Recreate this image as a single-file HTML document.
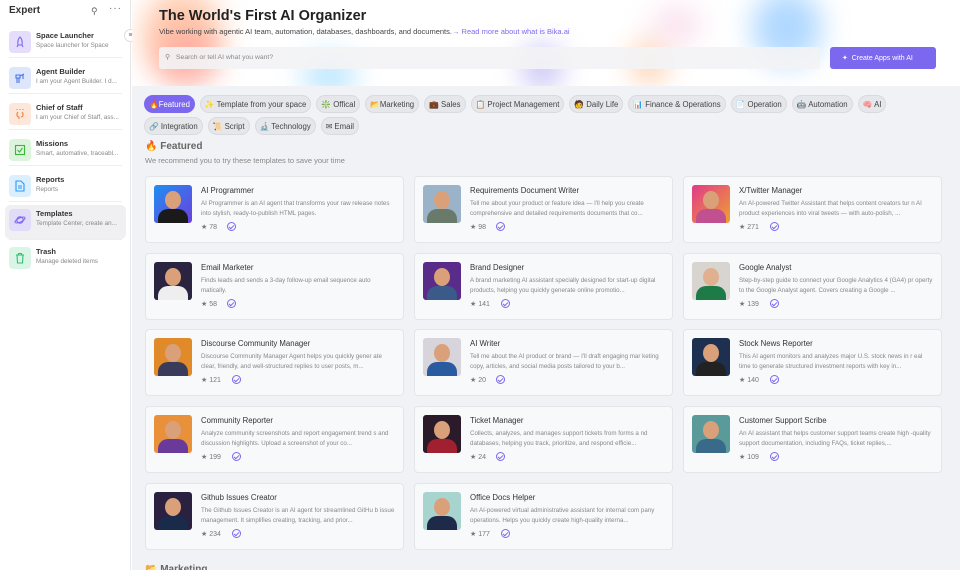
<!DOCTYPE html>
<html><head><meta charset="utf-8">
<style>
*{box-sizing:border-box;margin:0;padding:0}
body{width:960px;height:570px;overflow:hidden;font-family:"Liberation Sans",sans-serif;background:#fff;position:relative;color:#333}
.side{position:absolute;left:0;top:0;width:131px;height:570px;background:#fff;border-right:1px solid #e6e7eb}
.side .hd{position:absolute;left:9px;top:5px;font-size:10px;font-weight:bold;color:#333}
.side .ic1{position:absolute;left:91px;top:6px;font-size:9px;color:#666}
.side .ic2{position:absolute;left:109px;top:3px;font-size:10px;color:#666;letter-spacing:1px}
.it{position:absolute;left:5px;width:121px;height:34px;border-radius:5px}
.it .av{position:absolute;left:4px;top:4px;width:22px;height:22px;border-radius:4px;display:flex;align-items:center;justify-content:center}
.it .t{position:absolute;left:31px;top:4px;font-size:7.5px;font-weight:bold;color:#333}
.it .d{position:absolute;left:31px;top:15px;font-size:6.3px;color:#888;white-space:nowrap;width:88px;overflow:hidden}
.sep{position:absolute;left:9px;width:113px;height:1px;background:#eee}
.main{position:absolute;left:132px;top:0;width:828px;height:570px;overflow:hidden}
.top{position:absolute;left:0;top:0;width:828px;height:86px;background:#fff;overflow:hidden}
.blob{position:absolute;border-radius:50%;filter:blur(14px)}
.title{position:absolute;left:27px;top:8px;font-size:14.5px;font-weight:bold;color:#222}
.sub{position:absolute;left:27px;top:27px;font-size:7.5px;color:#444}
.sub span{color:#7b6cf0}
.search{position:absolute;left:27px;top:47px;width:661px;height:22px;background:rgba(243,243,245,.9);border-radius:3px;font-size:6.8px;color:#888;padding:7px 0 0 17px}
.btn{position:absolute;left:698px;top:47px;width:106px;height:22px;background:#7b68ee;border-radius:3px;color:#fff;font-size:7px;padding:7px 0 0 12px}
.gray{position:absolute;left:0;top:86px;width:828px;height:484px;background:#f1f2f5}
.chips{position:absolute;left:12px;top:9px;width:810px;display:flex;flex-wrap:wrap;column-gap:5px}
.chip{height:18px;margin-bottom:4px;border-radius:9px;background:#e6e7eb;border:1px solid #d9dadf;font-size:7.8px;color:#444;padding:4px 4px 0 4px;white-space:nowrap}
.chip.on{background:#7b68ee;color:#fff;border-color:#7b68ee}
.br{flex-basis:100%;height:0}
.fh{position:absolute;left:13px;top:55px;font-size:10px;font-weight:bold;color:#666}
.fs{position:absolute;left:13px;top:70px;font-size:7.5px;color:#888}
.card{position:absolute;width:259px;height:67px;background:#f8f9fb;border:1px solid #e4e5e9;border-radius:4px}
.card .pic{position:absolute;left:8px;top:8px;width:38px;height:38px;border-radius:3px;overflow:hidden}
.card .pic i{position:absolute;left:11px;top:6px;width:16px;height:18px;border-radius:50%;background:#d9a07a}
.card .pic b{position:absolute;left:4px;top:24px;width:30px;height:20px;border-radius:10px 10px 0 0}
.card .n{position:absolute;left:55px;top:9px;font-size:7.8px;color:#333}
.card .ds{position:absolute;left:55px;top:22px;width:195px;font-size:6.2px;line-height:10px;color:#888;height:20px;overflow:hidden}
.card .st{position:absolute;left:55px;top:46px;font-size:7px;color:#777}
.card .ck{position:absolute;top:45px;width:9px;height:9px;border:1.2px solid #7b68ee;border-radius:50%}
.card .ck:after{content:"";position:absolute;left:2px;top:1px;width:2px;height:4px;border:solid #7b68ee;border-width:0 1.2px 1.2px 0;transform:rotate(45deg)}
.mk{position:absolute;left:13px;top:478px;font-size:10px;font-weight:bold;color:#666}
</style></head><body>
<div class="side">
<div class="hd">Expert</div>
<div class="ic1">&#9906;</div><div class="ic2">···</div>
<div class="it" style="top:27px"><div class="av" style="background:#e4ddfb"><svg width="12" height="12" viewBox="0 0 12 12"><path d="M6 1C8 3 8.5 6 8 9H4C3.5 6 4 3 6 1ZM4 9L3 11M8 9L9 11" fill="none" stroke="#7b68ee" stroke-width="1.1"/></svg></div><div class="t">Space Launcher</div><div class="d">Space launcher for Space</div></div>
<div class="sep" style="top:57px"></div>
<div class="it" style="top:63px"><div class="av" style="background:#dde6fb"><svg width="12" height="12" viewBox="0 0 12 12"><path d="M2 3H6V6H2ZM6 4L10 2M9 2V7M3 6V11M5 6V11" fill="none" stroke="#4a74e8" stroke-width="1.1"/></svg></div><div class="t">Agent Builder</div><div class="d">I am your Agent Builder. I d...</div></div>
<div class="sep" style="top:93px"></div>
<div class="it" style="top:99px"><div class="av" style="background:#fde6da"><svg width="12" height="12" viewBox="0 0 12 12"><path d="M4 4C2 6 3 9 5 9V11M8 4C10 6 9 9 7 9M3 1V2M6 1V2M9 1V2" fill="none" stroke="#f0843c" stroke-width="1.1"/></svg></div><div class="t">Chief of Staff</div><div class="d">I am your Chief of Staff, ass...</div></div>
<div class="sep" style="top:129px"></div>
<div class="it" style="top:135px"><div class="av" style="background:#dcf3dc"><svg width="12" height="12" viewBox="0 0 12 12"><rect x="1.5" y="1.5" width="9" height="9" fill="none" stroke="#3cb53c" stroke-width="1.1"/><path d="M3.5 6L5.5 8L8.5 4" fill="none" stroke="#3cb53c" stroke-width="1.1"/></svg></div><div class="t">Missions</div><div class="d">Smart, automative, traceabl...</div></div>
<div class="sep" style="top:165px"></div>
<div class="it" style="top:171px"><div class="av" style="background:#dcefff"><svg width="12" height="12" viewBox="0 0 12 12"><path d="M2 1H7L10 4V11H2ZM4 6H8M4 8H8" fill="none" stroke="#2b9af3" stroke-width="1.1"/></svg></div><div class="t">Reports</div><div class="d">Reports</div></div>
<div class="sep" style="top:201px"></div>
<div class="it" style="top:205px;background:#f0f0f3"><div class="av" style="background:#e0dcf9;top:4px"><svg width="12" height="12" viewBox="0 0 12 12"><circle cx="6" cy="6" r="3.2" fill="none" stroke="#7b68ee" stroke-width="1.1"/><ellipse cx="6" cy="6" rx="5.5" ry="2" transform="rotate(-25 6 6)" fill="none" stroke="#7b68ee" stroke-width="1"/></svg></div><div class="t">Templates</div><div class="d">Template Center, create an...</div></div>
<div class="sep" style="top:239px"></div>
<div class="it" style="top:243px"><div class="av" style="background:#daf5e6"><svg width="12" height="12" viewBox="0 0 12 12"><path d="M2 3H10M4.5 3V1.5H7.5V3M3 3L3.5 11H8.5L9 3" fill="none" stroke="#2cbf74" stroke-width="1.1"/></svg></div><div class="t">Trash</div><div class="d">Manage deleted items</div></div>
<div style="position:absolute;left:124px;top:29px;width:13px;height:13px;border-radius:50%;background:#fff;border:1px solid #ddd;font-size:7px;text-align:center;line-height:11px;color:#666">&#8801;</div>
</div>
<div class="main">
<div class="top">
<div class="blob" style="left:10px;top:-10px;width:80px;height:90px;background:#ffb38a;opacity:.7"></div>
<div class="blob" style="left:25px;top:30px;width:60px;height:55px;background:#ff9a9a;opacity:.6"></div>
<div class="blob" style="left:170px;top:55px;width:55px;height:40px;background:#8fd6ff;opacity:.6"></div>
<div class="blob" style="left:390px;top:45px;width:40px;height:45px;background:#a49af0;opacity:.6"></div>
<div class="blob" style="left:500px;top:40px;width:35px;height:45px;background:#ffb07a;opacity:.6"></div>
<div class="blob" style="left:520px;top:5px;width:50px;height:40px;background:#f5c5e0;opacity:.5"></div>
<div class="blob" style="left:620px;top:-10px;width:70px;height:75px;background:#8fc8ff;opacity:.7"></div>
<div class="title">The World's First AI Organizer</div>
<div class="sub">Vibe working with agentic AI team, automation, databases, dashboards, and documents.<span>→ Read more about what is Bika.ai</span></div>
<div class="search"><span style="position:absolute;left:6px;top:6px">&#9906;</span>Search or tell AI what you want?</div>
<div class="btn">✦ &nbsp;Create Apps with AI</div>
</div>
<div class="gray">
<div class="chips">
<div class="chip on">🔥Featured</div><div class="chip">✨ Template from your space</div><div class="chip">❇️ Offical</div><div class="chip">📂Marketing</div><div class="chip">💼 Sales</div><div class="chip">📋 Project Management</div><div class="chip">🧑 Daily Life</div><div class="chip">📊 Finance &amp; Operations</div><div class="chip">📄 Operation</div><div class="chip">🤖 Automation</div><div class="chip">🧠 AI</div>
<div class="br"></div>
<div class="chip">🔗 Integration</div><div class="chip">📜 Script</div><div class="chip">🔬 Technology</div><div class="chip">✉ Email</div>
</div>
<div class="fh">🔥 Featured</div>
<div class="fs">We recommend you to try these templates to save your time</div>

<div class="card" style="left:13px;top:90px"><div class="pic" style="background:linear-gradient(135deg,#1f8ff0,#6b3fe0)"><i></i><b style="background:#1a1a1a"></b></div><div class="n">AI Programmer</div><div class="ds">AI Programmer is an AI agent that transforms your raw release notes into stylish, ready-to-publish HTML pages.</div><div class="st">★ 78</div><div class="ck" style="left:81px"></div></div>
<div class="card" style="left:282px;top:90px"><div class="pic" style="background:#9bb3c8"><i></i><b style="background:#6a7a6a"></b></div><div class="n">Requirements Document Writer</div><div class="ds">Tell me about your product or feature idea — I'll help you create comprehensive and detailed requirements documents that co...</div><div class="st">★ 98</div><div class="ck" style="left:81px"></div></div>
<div class="card" style="left:551px;top:90px"><div class="pic" style="background:linear-gradient(135deg,#e03a8a,#f0a030)"><i></i><b style="background:#c05090"></b></div><div class="n">X/Twitter Manager</div><div class="ds">An AI-powered Twitter Assistant that helps content creators tur n AI product experiences into viral tweets — with auto-polish, ...</div><div class="st">★ 271</div><div class="ck" style="left:86px"></div></div>

<div class="card" style="left:13px;top:167px"><div class="pic" style="background:#2a2440"><i></i><b style="background:#eee"></b></div><div class="n">Email Marketer</div><div class="ds">Finds leads and sends a 3-day follow-up email sequence auto matically.</div><div class="st">★ 58</div><div class="ck" style="left:81px"></div></div>
<div class="card" style="left:282px;top:167px"><div class="pic" style="background:#5a2c8a"><i></i><b style="background:#3a5a8a"></b></div><div class="n">Brand Designer</div><div class="ds">A brand marketing AI assistant specially designed for start-up digital products, helping you quickly generate online promotio...</div><div class="st">★ 141</div><div class="ck" style="left:86px"></div></div>
<div class="card" style="left:551px;top:167px"><div class="pic" style="background:#d8d4d0"><i style="background:#e0b090"></i><b style="background:#1e7a46"></b></div><div class="n">Google Analyst</div><div class="ds">Step-by-step guide to connect your Google Analytics 4 (GA4) pr operty to the Google Analyst agent. Covers creating a Google ...</div><div class="st">★ 139</div><div class="ck" style="left:86px"></div></div>

<div class="card" style="left:13px;top:243px"><div class="pic" style="background:#e08a2a"><i></i><b style="background:#3a3a5a"></b></div><div class="n">Discourse Community Manager</div><div class="ds">Discourse Community Manager Agent helps you quickly gener ate clear, friendly, and well-structured replies to user posts, m...</div><div class="st">★ 121</div><div class="ck" style="left:86px"></div></div>
<div class="card" style="left:282px;top:243px"><div class="pic" style="background:#d8d4dc"><i></i><b style="background:#2a5aa0"></b></div><div class="n">AI Writer</div><div class="ds">Tell me about the AI product or brand — I'll draft engaging mar keting copy, articles, and social media posts tailored to your b...</div><div class="st">★ 20</div><div class="ck" style="left:81px"></div></div>
<div class="card" style="left:551px;top:243px"><div class="pic" style="background:#1e3050"><i></i><b style="background:#222"></b></div><div class="n">Stock News Reporter</div><div class="ds">This AI agent monitors and analyzes major U.S. stock news in r eal time to generate structured investment reports with key in...</div><div class="st">★ 140</div><div class="ck" style="left:86px"></div></div>

<div class="card" style="left:13px;top:320px"><div class="pic" style="background:#e8903a"><i></i><b style="background:#6a3a9a"></b></div><div class="n">Community Reporter</div><div class="ds">Analyze community screenshots and report engagement trend s and discussion highlights. Upload a screenshot of your co...</div><div class="st">★ 199</div><div class="ck" style="left:86px"></div></div>
<div class="card" style="left:282px;top:320px"><div class="pic" style="background:#2a1a2a"><i></i><b style="background:#a02030"></b></div><div class="n">Ticket Manager</div><div class="ds">Collects, analyzes, and manages support tickets from forms a nd databases, helping you track, prioritize, and respond efficie...</div><div class="st">★ 24</div><div class="ck" style="left:81px"></div></div>
<div class="card" style="left:551px;top:320px"><div class="pic" style="background:#5a9a9a"><i></i><b style="background:#3a6a8a"></b></div><div class="n">Customer Support Scribe</div><div class="ds">An AI assistant that helps customer support teams create high -quality support documentation, including FAQs, ticket replies,...</div><div class="st">★ 109</div><div class="ck" style="left:86px"></div></div>

<div class="card" style="left:13px;top:397px"><div class="pic" style="background:#2a2040"><i></i><b style="background:#1a2a4a"></b></div><div class="n">Github Issues Creator</div><div class="ds">The Github Issues Creator is an AI agent for streamlined GitHu b issue management. It simplifies creating, tracking, and prior...</div><div class="st">★ 234</div><div class="ck" style="left:86px"></div></div>
<div class="card" style="left:282px;top:397px"><div class="pic" style="background:#a8d4d0"><i></i><b style="background:#1e2a4a"></b></div><div class="n">Office Docs Helper</div><div class="ds">An AI-powered virtual administrative assistant for internal com pany operations. Helps you quickly create high-quality interna...</div><div class="st">★ 177</div><div class="ck" style="left:86px"></div></div>
<div class="mk">📂 Marketing</div>
</div>
</div>
</body></html>
